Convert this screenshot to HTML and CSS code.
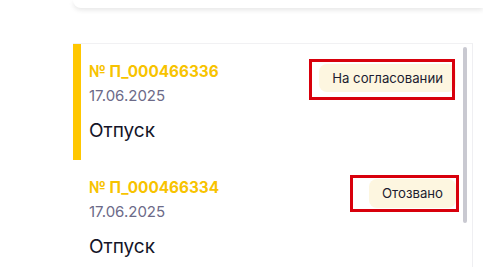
FILE: index.html
```html
<!DOCTYPE html>
<html lang="ru">
<head>
<meta charset="utf-8">
<link rel="stylesheet" href="styles.css">
</head>
<body>
<div class="page">
  <div class="top-card"></div>
  <div class="list">
    <div class="item active">
      <div class="info">
        <div class="num">№ П_000466336</div>
        <div class="date">17.06.2025</div>
        <div class="type">Отпуск</div>
      </div>
      <div class="badge b1">На согласовании</div>
    </div>
    <div class="item">
      <div class="info">
        <div class="num">№ П_000466334</div>
        <div class="date">17.06.2025</div>
        <div class="type">Отпуск</div>
      </div>
      <div class="badge b2">Отозвано</div>
    </div>
    <div class="scrollbar"></div>
    <div class="mark m1"></div>
    <div class="mark m2"></div>
  </div>
</div>
</body>
</html>
```
FILE: styles.css
```css
html, body {
  margin: 0;
  padding: 0;
  background: #ffffff;
  overflow: hidden;
}
body {
  font-family: Inter, "Noto Sans", sans-serif;
  width: 483px;
  height: 267px;
}
.page {
  padding-left: 73px;
  height: 267px;
  overflow: hidden;
}
.top-card {
  height: 8px;
  background: #ffffff;
  border-radius: 0 0 0 12px;
  box-shadow: 0 2px 5px rgba(0, 0, 0, 0.10);
}
.list {
  position: relative;
  margin-top: 35px;
  width: 399px;
  height: 223px;
  overflow: hidden;
  border-top: 1px solid #f1f1f3;
  border-right: 1px solid #efeff2;
}
.item {
  display: flex;
  justify-content: space-between;
  align-items: flex-start;
  height: 116px;
  padding: 0 16px 0 16px;
  box-sizing: border-box;
  border-left: 8px solid transparent;
}
.item.active {
  border-left-color: #ffc700;
}
.info {
  padding-top: 18px;
  margin-left: -8px;
}
.num {
  color: #f7c300;
  font-weight: 700;
  font-size: 15.3px;
  line-height: 20px;
}
.date {
  color: #6c6a88;
  font-size: 15px;
  line-height: 20px;
  margin-top: 4px;
}
.type {
  color: #141428;
  font-size: 19px;
  line-height: 24px;
  margin-top: 13px;
}
.badge {
  background: #fdf6e0;
  color: #1c1c30;
  font-size: 13.2px;
  line-height: 28px;
  height: 28px;
  padding: 0 13px;
  border-radius: 8px;
  margin-top: 20px;
}
.b2 {
  margin-top: 19px;
  height: 29px;
  line-height: 29px;
}
.scrollbar {
  position: absolute;
  left: 390px;
  top: 3px;
  width: 4px;
  height: 176px;
  border-radius: 2px;
  background: #c9c9d1;
}
.mark {
  position: absolute;
  border: 3.5px solid #d8000c;
  box-sizing: border-box;
}
.m1 {
  left: 236px;
  top: 15px;
  width: 146px;
  height: 41px;
}
.m2 {
  left: 277px;
  top: 131px;
  width: 109px;
  height: 37px;
}
```
